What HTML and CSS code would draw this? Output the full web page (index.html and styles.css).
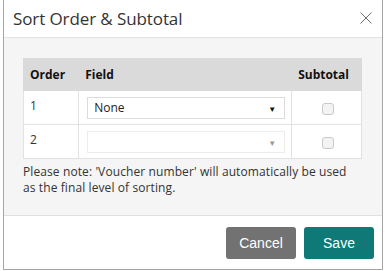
FILE: index.html
```html
<!DOCTYPE html>
<html lang="en">
<head>
    <meta charset="UTF-8">
    <title>Sort Order &amp; Subtotal</title>
    <link rel="stylesheet" href="styles.css">
</head>
<body>
    <div class="dialog">
        <div class="dialog-header">
            <h1 class="dialog-title">Sort Order &amp; Subtotal</h1>
            <button class="close" aria-label="Close">
                <svg width="12" height="12" viewBox="0 0 12 12"><path d="M0.5 0.5 L11.5 11.5 M11.5 0.5 L0.5 11.5" stroke="#6b6b6b" stroke-width="1" fill="none"/></svg>
            </button>
        </div>

        <div class="dialog-body">
            <table class="sort-table">
                <thead>
                    <tr>
                        <th class="col-order">Order</th>
                        <th class="col-field">Field</th>
                        <th class="col-subtotal">Subtotal</th>
                    </tr>
                </thead>
                <tbody>
                    <tr>
                        <td>1</td>
                        <td>
                            <div class="select">
                                <span class="select-value">None</span>
                                <span class="select-arrow">&#9660;</span>
                            </div>
                        </td>
                        <td class="center"><span class="checkbox"></span></td>
                    </tr>
                    <tr>
                        <td>2</td>
                        <td>
                            <div class="select disabled">
                                <span class="select-value"></span>
                                <span class="select-arrow">&#9660;</span>
                            </div>
                        </td>
                        <td class="center"><span class="checkbox"></span></td>
                    </tr>
                </tbody>
            </table>
            <p class="note">Please note: 'Voucher number' will automatically be used as the final level of sorting.</p>
        </div>

        <div class="dialog-footer">
            <button class="btn btn-cancel">Cancel</button>
            <button class="btn btn-save">Save</button>
        </div>
    </div>
</body>
</html>
```

FILE: styles.css
```css
* {
    margin: 0;
    padding: 0;
    box-sizing: border-box;
}

body {
    font-family: "Open Sans", "Noto Sans", Arial, sans-serif;
    background-color: white;
    color: #333;
}

.dialog {
    margin-left: 3px;
    width: 380px;
    height: 270px;
    border: 1px solid #a6a6a6;
    border-top: none;
    background-color: white;
    display: flex;
    flex-direction: column;
}

.dialog-header {
    height: 38px;
    border-bottom: 1px solid #e3e3e3;
    display: flex;
    align-items: center;
    justify-content: space-between;
    padding: 0 10px 0 9px;
}

.dialog-title {
    font-size: 17px;
    font-weight: 400;
    color: #333;
    letter-spacing: -0.1px;
}

.close {
    border: none;
    background: none;
    width: 12px;
    height: 12px;
    display: flex;
    margin-top: -1px;
}

.dialog-body {
    background-color: #f5f5f5;
    padding: 20px 19px 0 19px;
    height: 178px;
    border-bottom: 1px solid #e0e0e0;
}

.sort-table {
    width: 339px;
    border-collapse: collapse;
    font-size: 12px;
}

.sort-table th {
    background-color: #dbdada;
    height: 32px;
    text-align: left;
    font-weight: 700;
    color: #111;
    padding: 0 6px;
    border: 1px solid #dbdada;
}

.sort-table th.col-order {
    width: 61px;
}

.sort-table th.col-subtotal {
    width: 69px;
    text-align: right;
    padding-right: 12px;
}

.sort-table td {
    background-color: white;
    height: 34px;
    border: 1px solid #e2e2e2;
    padding: 0 6px;
    vertical-align: middle;
}

.sort-table td:first-child {
    vertical-align: top;
    padding-top: 6px;
}

.center {
    text-align: center;
}

.select {
    position: relative;
    height: 22px;
    width: 198px;
    border: 1px solid #dcdcdc;
    background-color: white;
    display: flex;
    align-items: center;
    padding-left: 6px;
    font-size: 12px;
    color: #222;
    margin-left: 2px;
}

.select.disabled {
    border-color: #ececec;
}

.select-arrow {
    position: absolute;
    right: 8px;
    top: 5px;
    font-size: 8px;
    color: #111;
}

.select.disabled .select-arrow {
    color: #999;
}

.checkbox {
    display: inline-block;
    width: 12px;
    height: 12px;
    border: 1px solid #c9c9c9;
    border-radius: 3px;
    background-color: #f3f3f3;
    vertical-align: middle;
    margin-left: 3px;
}

.note {
    max-width: 330px;
    margin-top: 5px;
    font-size: 12px;
    letter-spacing: 0.1px;
    line-height: 16px;
    color: #333;
}

.dialog-footer {
    flex: 1;
    display: flex;
    justify-content: flex-end;
    align-items: center;
    gap: 8px;
    padding-right: 8px;
}

.btn {
    width: 70px;
    height: 32px;
    border: none;
    border-radius: 3px;
    color: white;
    font-family: "Liberation Sans", Arial, sans-serif;
    font-size: 14px;
}

.btn-cancel {
    background-color: #727272;
}

.btn-save {
    background-color: #0e7976;
}
```
